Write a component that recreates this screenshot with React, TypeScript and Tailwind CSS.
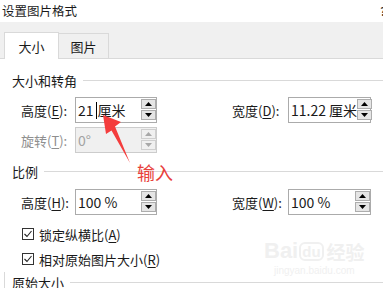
import React from "react";

const F = { fontFamily: '"Noto Sans CJK SC", "Noto Sans", sans-serif' };

function Spinner({ disabled }: { disabled?: boolean }) {
  const tri = disabled ? "#a8a8a8" : "#000";
  const btn = disabled
    ? "w-[15px] h-[10px] bg-[#f0f0f0] border border-[#cfcfcf] flex items-center justify-center"
    : "w-[15px] h-[10px] bg-[#e5e5e5] border border-[#adadad] flex items-center justify-center";
  return (
    <div className="flex flex-col gap-[1px] mt-[1px] shrink-0">
      <div className={btn}>
        <svg width="7" height="4" viewBox="0 0 7 4"><polygon points="3.5,0 7,4 0,4" fill={tri} /></svg>
      </div>
      <div className={btn}>
        <svg width="7" height="4" viewBox="0 0 7 4"><polygon points="0,0 7,0 3.5,4" fill={tri} /></svg>
      </div>
    </div>
  );
}

function Input({ children, w, disabled, h = 26 }: { children: React.ReactNode; w: number; disabled?: boolean; h?: number }) {
  return (
    <div
      className={
        "flex items-start justify-between border shrink-0 " +
        (disabled ? "bg-[#f0f0f0] border-[#cccccc]" : "bg-white border-[#ababab]")
      }
      style={{ width: w, height: h }}
    >
      <div className={"pl-[2px] h-full flex items-center whitespace-nowrap text-[14px] leading-none " + (disabled ? "text-[#a3a3a3]" : "text-[#1a1a1a]")}>
        {children}
      </div>
      <Spinner disabled={disabled} />
    </div>
  );
}

function Section({ title, className }: { title: string; className?: string }) {
  return (
    <div className={"flex items-center h-[18px] pl-[12px] " + (className || "")}>
      <span className="text-[13px] leading-none text-[#1a1a1a]">{title}</span>
      <div className="flex-1 ml-[6px] border-t border-[#d9d9d9]" />
    </div>
  );
}

function Label({ pre, acc, w, disabled }: { pre: string; acc: string; w: number; disabled?: boolean }) {
  return (
    <div className={"shrink-0 text-[13px] leading-none whitespace-nowrap " + (disabled ? "text-[#8f8f8f]" : "text-[#1a1a1a]")} style={{ width: w }}>
      {pre}(<span className="underline underline-offset-2">{acc}</span>):
    </div>
  );
}

function Check({ text, acc, className }: { text: string; acc: string; className?: string }) {
  return (
    <div className={"flex items-center h-[18px] pl-[22px] " + (className || "")}>
      <div className="w-[12px] h-[12px] border border-[#333333] bg-white flex items-center justify-center">
        <svg width="10" height="10" viewBox="0 0 10 10">
          <polyline points="1.5,5 4,7.5 8.5,2" fill="none" stroke="#222" strokeWidth="1.1" />
        </svg>
      </div>
      <span className="ml-[5px] text-[13px] leading-none text-[#1a1a1a]">
        {text}(<span className="underline underline-offset-2">{acc}</span>)
      </span>
    </div>
  );
}

export default function App() {
  return (
    <div className="relative w-[383px] h-[288px] overflow-hidden bg-white" style={F}>
      {/* title bar */}
      <div className="h-[22px] flex items-center pl-[2px]">
        <span className="text-[12.5px] leading-none text-[#1a1a1a]">设置图片格式</span>
        <span className="ml-auto mr-[-3px] text-[11px] font-bold text-[#333] leading-none">?</span>
      </div>
      {/* tab band */}
      <div className="h-[37px] bg-[#f0f0f0] border-b border-[#d9d9d9] flex items-end pl-[4px]">
        <div className="w-[55px] h-[27px] -mb-px bg-white border border-b-0 border-[#d9d9d9] flex items-center justify-center text-[13px] leading-none text-[#1a1a1a]">
          大小
        </div>
        <div className="w-[50px] h-[25px] bg-[#f0f0f0] border border-l-0 border-b-0 border-[#d9d9d9] flex items-center justify-center text-[13px] leading-none text-[#1a1a1a]">
          图片
        </div>
      </div>

      {/* content */}
      <Section title="大小和转角" className="mt-[12px]" />
      <div className="flex items-center pl-[21px] mt-[8px]">
        <Label pre="高度" acc="E" w={54} />
        <Input w={82}>
          <span>21</span>
          <span className="inline-block w-[1px] h-[17px] bg-black ml-[2px] mr-[1px]" />
          <span>厘米</span>
        </Input>
        <div className="w-[75px] shrink-0" />
        <Label pre="宽度" acc="D" w={56} />
        <Input w={83}>
          <span>11.22 厘米</span>
        </Input>
      </div>
      <div className="flex items-center pl-[21px] mt-[4px]">
        <Label pre="旋转" acc="T" w={54} disabled />
        <Input w={82} disabled>
          <span>0°</span>
        </Input>
      </div>

      <Section title="比例" className="mt-[9px]" />
      <div className="flex items-center pl-[21px] mt-[9px]">
        <Label pre="高度" acc="H" w={54} />
        <Input w={82}>
          <span>100 %</span>
        </Input>
        <div className="w-[75px] shrink-0" />
        <Label pre="宽度" acc="W" w={56} />
        <Input w={83}>
          <span>100 %</span>
        </Input>
      </div>

      <Check text="锁定纵横比" acc="A" className="mt-[10px]" />
      <Check text="相对原始图片大小" acc="R" className="mt-[7px]" />
      <Section title="原始大小" className="mt-[5px]" />

      {/* left border hint at bottom */}
      <div className="absolute left-[4px] top-[272px] w-px h-[16px] bg-[#d9d9d9]" />

      {/* watermark */}
      <div className="absolute left-[264px] top-[240px] flex flex-col items-center text-[#f0f0f0] pointer-events-none">
        <div className="flex items-center leading-none">
          <span className="text-[22px] font-bold" style={{ fontFamily: '"Liberation Sans", sans-serif' }}>Bai</span>
          <span className="ml-[1px] text-[15px] font-bold border-2 border-[#f0f0f0] rounded-[6px] px-[1px] leading-none" style={{ fontFamily: '"Liberation Sans", sans-serif' }}>du</span>
          <span className="ml-[3px] text-[19px] font-bold">经验</span>
        </div>
        <span className="text-[10px] leading-none mt-[4px]" style={{ fontFamily: '"Liberation Sans", sans-serif' }}>jingyan.baidu.com</span>
      </div>

      {/* red arrow */}
      <svg className="absolute left-0 top-0 pointer-events-none" width="383" height="288">
        <polygon
          points="103,115 121,122 115,126.5 130,163 111.5,130.5 106,134"
          fill="#f43d3d"
        />
      </svg>
      <div className="absolute left-[137px] top-[163px] text-[18px] leading-none text-[#e8413b]">输入</div>
    </div>
  );
}
